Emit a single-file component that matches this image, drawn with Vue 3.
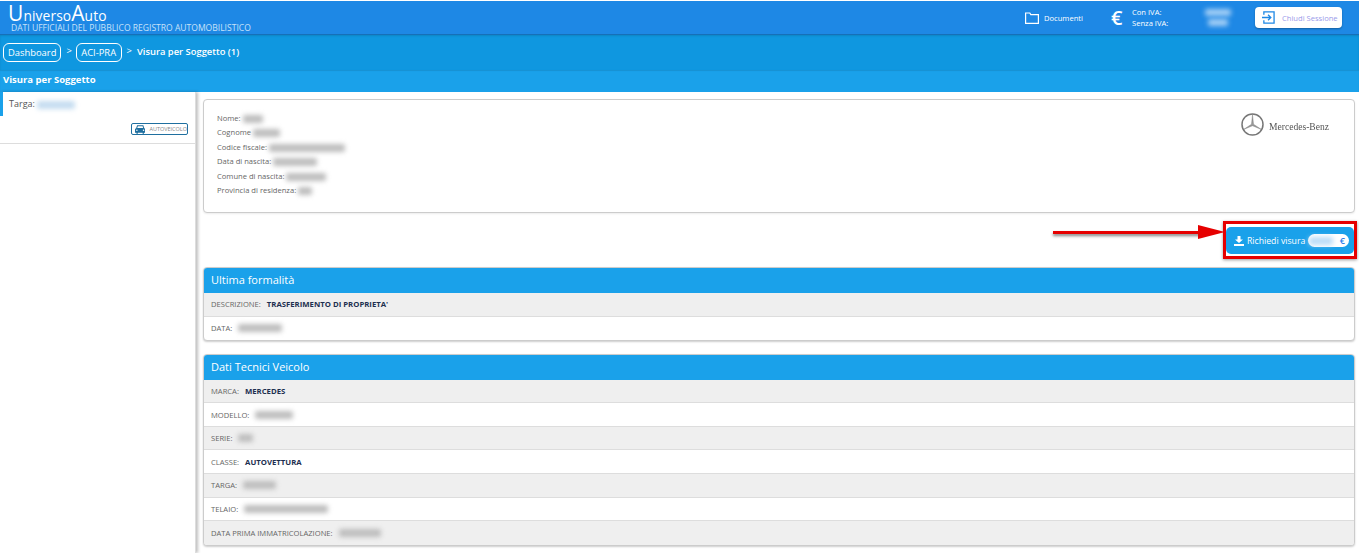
<script setup>
const person = [
  { label: 'Nome:', w: 20 },
  { label: 'Cognome', w: 27 },
  { label: 'Codice fiscale:', w: 76 },
  { label: 'Data di nascita:', w: 44 },
  { label: 'Comune di nascita:', w: 40 },
  { label: 'Provincia di residenza:', w: 14 }
]
const formalita = [
  { label: 'DESCRIZIONE:', value: "TRASFERIMENTO DI PROPRIETA'" },
  { label: 'DATA:', w: 44 }
]
const tecnici = [
  { label: 'MARCA:', value: 'MERCEDES' },
  { label: 'MODELLO:', w: 38 },
  { label: 'SERIE:', w: 15 },
  { label: 'CLASSE:', value: 'AUTOVETTURA' },
  { label: 'TARGA:', w: 33 },
  { label: 'TELAIO:', w: 84 },
  { label: 'DATA PRIMA IMMATRICOLAZIONE:', w: 42 }
]
const panels = [
  { title: 'Ultima formalità', rows: formalita },
  { title: 'Dati Tecnici Veicolo', rows: tecnici }
]
</script>

<template>
  <div class="page">
    <header class="top">
      <div class="brand">
        <div class="logo"><span class="cap">U</span>niverso<span class="cap">A</span>uto</div>
        <div class="tag">DATI UFFICIALI DEL PUBBLICO REGISTRO AUTOMOBILISTICO</div>
      </div>
      <div class="tools">
        <div class="docs">
          <svg width="14" height="12" viewBox="0 0 14 12" fill="none" stroke="#fff" stroke-width="1.2"><path d="M.6 11.4V1h4.200l1 1.600h7.600v8.800z" /></svg>
          <span>Documenti</span>
        </div>
        <div class="iva">
          <span class="euro">€</span>
          <div class="iva-text"><div>Con IVA:</div><div>Senza IVA:</div></div>
        </div>
        <div class="iva-values"><span class="blur white w1"></span><span class="blur white w2"></span></div>
        <button class="logout">
          <svg width="13" height="13" viewBox="0 0 14 14" fill="none" stroke="#1e88e5" stroke-width="1.4"><path d="M2 4V1h11v12H2v-3" /><path d="M0 7h9M6.500 4l3 3-3 3" /></svg>
          <span>Chiudi Sessione</span>
        </button>
      </div>
    </header>

    <nav class="crumbs">
      <a class="crumb">Dashboard</a><span class="sep">&gt;</span>
      <a class="crumb wide">ACI-PRA</a><span class="sep">&gt;</span>
      <span class="current">Visura per Soggetto (1)</span>
    </nav>

    <div class="title">Visura per Soggetto</div>

    <div class="body">
      <aside class="side">
        <div class="side-item">
          <div class="targa">Targa: <span class="blur pale w-targa"></span></div>
          <div class="tag-row">
            <span class="kind">
              <svg width="11" height="9" viewBox="0 0 11 9" fill="#1f6f9f"><path d="M2.200 0h6.600l1 3.200c.7.2 1.200.7 1.200 1.400V8H9.500v1H8V8H3v1H1.500V8H0V4.600c0-.7.500-1.200 1.200-1.400zM3 1 2.400 3h6.200L8 1zM2 4.500a.8.8 0 100 1.600.8.8 0 000-1.600zm7 0a.8.8 0 100 1.600.8.8 0 000-1.600z" /></svg>
              AUTOVEICOLO
            </span>
          </div>
        </div>
      </aside>

      <main class="content">
        <section class="card">
          <div class="person">
            <div v-for="p in person" :key="p.label" class="person-row">
              {{ p.label }} <span class="blur grey" :style="{ width: p.w + 'px' }"></span>
            </div>
          </div>
          <div class="brand-logo">
            <svg width="23" height="23" viewBox="0 0 46 46" fill="none" stroke="#777">
              <circle cx="23" cy="23" r="21" stroke-width="3" />
              <path d="M23 3l2 19.500L41 33 23 25.500 5 33l16-10.500z" fill="#999" stroke-width=".8" />
            </svg>
            <span class="mb">Mercedes-Benz</span>
          </div>
        </section>

        <div class="action">
          <div class="arrow"></div>
          <div class="highlight">
            <button class="req">
              <svg width="10" height="10" viewBox="0 0 10 10" fill="#fff"><path d="M3.500 0h3v3.500H9L5 7 1 3.500h2.500zM0 8h10v2H0z" /></svg>
              <span>Richiedi visura</span>
              <span class="price"><span class="blur bluish"></span><b>€</b></span>
            </button>
          </div>
        </div>

        <section v-for="panel in panels" :key="panel.title" class="panel">
          <h2>{{ panel.title }}</h2>
          <div v-for="r in panel.rows" :key="r.label" class="row">
            <span class="lab">{{ r.label }}</span>
            <strong v-if="r.value">{{ r.value }}</strong>
            <span v-else class="blur grey" :style="{ width: r.w + 'px' }"></span>
          </div>
        </section>
      </main>
    </div>
  </div>
</template>

<style>
html, body { margin: 0; background: #fff; overflow: hidden; }
</style>

<style scoped>
.page {
  width: 1359px;
  height: 553px;
  overflow: hidden;
  font-family: "Open Sans", sans-serif;
  color: #555;
  display: flex;
  flex-direction: column;
}
.top {
  height: 33px;
  margin-top: 1px;
  background: #1e88e5;
  border-bottom: 1px solid #1670b8;
  display: flex;
  justify-content: space-between;
  align-items: center;
  color: #fff;
  box-sizing: content-box;
  flex: none;
}
.brand { padding-left: 8px; }
.logo { font-size: 13.800px; line-height: 20px; letter-spacing: .1px; height: 20px; }
.cap { font-size: 21px; }
.tag { font-size: 8.550px; line-height: 10px; color: #c7e2f9; padding-left: 3px; white-space: nowrap; }
.tools { display: flex; align-items: center; height: 100%; }
.docs { display: flex; align-items: center; gap: 5px; font-size: 7.600px; width: 86px; }
.iva { display: flex; align-items: center; gap: 6px; font-size: 7.600px; line-height: 11px; width: 94px; }
.euro { font-size: 20px; line-height: 20px; width: 15px; font-weight: 600; }
.iva-values { display: flex; flex-direction: column; gap: 3px; width: 50px; }
.logout {
  width: 87px;
  height: 21px;
  margin-right: 17px;
  background: #fff;
  border: 0;
  border-radius: 4px;
  box-shadow: 0 1px 2px rgba(0,0,0,.3);
  display: flex;
  align-items: center;
  gap: 7px;
  padding: 0 0 0 7px;
  color: #9a9aea;
  font: 7.600px "Open Sans", sans-serif;
  white-space: nowrap;
}
.crumbs {
  height: 35px;
  background: #0f97e0;
  display: flex;
  align-items: center;
  padding: 0 3px 1px;
  color: #fff;
  font-size: 9.400px;
  font-weight: 500;
  flex: none;
  box-shadow: inset 0 1px 2px rgba(0,0,0,.12);
  box-sizing: border-box;
}
.crumb { border: 1px solid #fff; border-radius: 6px; padding: 2px 4px; line-height: 13px; font-weight: 500; }
.crumb.wide { padding: 2px 4.500px; }
.sep { margin: 0 5px 3px 5px; font-weight: 400; }
.sep:first-of-type { margin-right: 4px; }
.current { margin: -1px 0 0 0; font-weight: 600; }
.title {
  height: 22px;
  background: #1aa1ea;
  color: #fff;
  font-size: 9.500px;
  font-weight: 700;
  line-height: 20px;
  padding-left: 3px;
  flex: none;
  box-shadow: inset 0 1px 1px rgba(0,0,0,.1);
}
.body { flex: 1; display: flex; min-height: 0; }
.side {
  width: 195px;
  flex: none;
  background: #fff;
  border-right: 1px solid #ddd;
  box-shadow: 2px 0 3px rgba(0,0,0,.25);
  box-sizing: content-box;
}
.side-item { height: 51px; border-bottom: 1px solid #ddd; position: relative; padding-left: 9px; }
.side-item::before { content: ""; position: absolute; left: 0; top: 0; width: 3px; height: 24px; background: #1aa1ea; }
.targa { font-size: 9px; line-height: 24px; }
.tag-row { display: flex; justify-content: flex-end; padding: 7px 7px 0 0; }
.kind {
  display: inline-flex;
  align-items: center;
  gap: 4px;
  height: 12px;
  width: 57px;
  box-sizing: border-box;
  padding-left: 3px;
  border: 1px solid #1f6f9f;
  border-radius: 2px;
  font-size: 5.500px;
  color: #888;
  white-space: nowrap;
}
.content { flex: 1; padding: 7px 4px 0 7px; min-width: 0; }
.card {
  height: 114px;
  box-sizing: border-box;
  background: #fff;
  border: 1px solid #ccc;
  border-radius: 4px;
  box-shadow: 0 1px 2px rgba(0,0,0,.08);
  display: flex;
  justify-content: space-between;
  padding: 11px 26px 0 13px;
}
.person-row { font-size: 7.600px; line-height: 14.400px; color: #666; white-space: nowrap; }
.brand-logo { display: flex; align-items: center; gap: 5px; height: 23px; margin-top: 2px; }
.mb { font-family: "Liberation Serif", serif; font-size: 10.500px; color: #555; transform: scaleX(.91); transform-origin: left; width: 59px; white-space: nowrap; padding-top: 3px; }
.action { height: 54px; position: relative; display: flex; justify-content: flex-end; align-items: center; margin-right: -2px; }
.highlight { border: 3px solid #e60000; box-shadow: 0 1px 3px rgba(0,0,0,.4); padding: 3px 0 2px; height: 38px; box-sizing: border-box; width: 134px; }
.req {
  width: 100%;
  height: 100%;
  background: #1aa1ea;
  border: 0;
  border-radius: 5px;
  color: #fff;
  display: flex;
  align-items: center;
  gap: 3px;
  padding: 0 5px 0 8px;
  font: 500 8.700px "Open Sans", sans-serif;
  white-space: nowrap;
}
.price { flex: 1; height: 13px; background: #fff; border-radius: 7px; display: flex; align-items: center; justify-content: space-between; padding: 0 4px 0 1px; color: #2b7de9; }
.price b { font-size: 9px; font-weight: 600; }
.bluish { width: 24px; height: 10px; background: #b9dcf7; }
.arrow {
  position: absolute;
  left: 850px;
  top: 18px;
  width: 150px;
  height: 3px;
  background: #e60000;
  box-shadow: 0 2px 3px rgba(0,0,0,.5);
}
.arrow::after {
  content: "";
  position: absolute;
  right: -22px;
  top: -6px;
  border-left: 27px solid #e60000;
  border-top: 7.500px solid transparent;
  border-bottom: 7.500px solid transparent;
}
.panel {
  background: #fff;
  border: 1px solid #ccc;
  border-radius: 4px;
  overflow: hidden;
  margin-bottom: 12.500px;
  box-shadow: 0 1px 2px rgba(0,0,0,.2);
}
.panel h2 {
  margin: 0;
  height: 25px;
  background: #1aa1ea;
  color: #fff;
  font-size: 11px;
  font-weight: 400;
  line-height: 24px;
  padding-left: 7px;
}
.row {
  height: 23.600px;
  box-sizing: border-box;
  border-bottom: 1px solid #ddd;
  display: flex;
  align-items: center;
  gap: 6px;
  padding-left: 7px;
  font-size: 7.600px;
}
.row:last-child { border-bottom: 0; }
.row:nth-child(even) { background: #efefef; }
.lab { color: #666; }
.row strong { color: #1d2f4f; font-weight: 700; font-size: 7.750px; }
.blur { display: inline-block; height: 8px; border-radius: 2px; filter: blur(2.500px); vertical-align: middle; }
.grey { background: #bdbdbd; }
.pale { background: #c4dcf0; }
.white { background: #a6d0f6; display: block; }
.w1 { width: 26px; height: 7px; }
.w2 { width: 20px; height: 7px; margin-left: 3px; }
.w-targa { width: 38px; }
</style>
